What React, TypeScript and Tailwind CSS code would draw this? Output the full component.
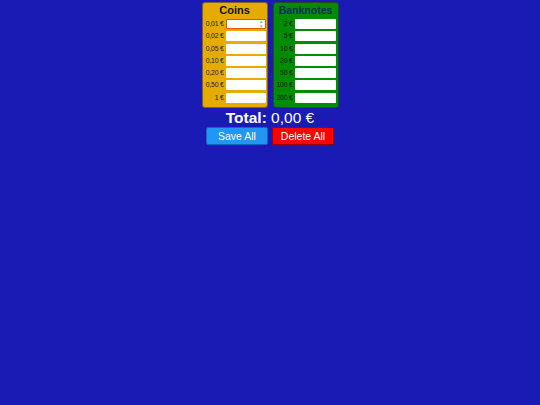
import React from "react";

const coins = ["0,01 €", "0,02 €", "0,05 €", "0,10 €", "0,20 €", "0,50 €", "1 €"];
const notes = ["2 €", "5 €", "10 €", "20 €", "50 €", "100 €", "200 €"];

function Panel({ title, items, kind }: { title: string; items: string[]; kind: "coins" | "notes" }) {
  const isCoins = kind === "coins";
  return (
    <div
      className={
        isCoins
          ? "w-[66px] h-[106px] rounded-[3px] border border-[#7a6420] bg-[#e6ab00] flex flex-col px-[1px]"
          : "w-[66px] h-[106px] rounded-[3px] border border-[#1f4d1f] bg-[#008c00] flex flex-col px-[1px]"
      }
    >
      <div
        className={
          isCoins
            ? "h-[15px] text-center text-[11px] font-bold leading-[15px] text-[#111]"
            : "h-[15px] text-center text-[10.5px] font-bold leading-[15px] text-[#07305a]"
        }
      >
        {title}
      </div>
      <div className="flex flex-col gap-[2.3px] mt-[1px]">
        {items.map((it, i) => (
          <div key={it} className="flex items-center h-[10px]">
            <span
              className={
                isCoins
                  ? "w-[20px] shrink-0 text-right text-[6.8px] leading-[10px] text-[#222] whitespace-nowrap tracking-[-0.2px]"
                  : "w-[18px] shrink-0 text-right text-[6.8px] leading-[10px] text-[#111] whitespace-nowrap tracking-[-0.2px]"
              }
            >
              {it}
            </span>
            <div
              className={
                i === 0 && isCoins
                  ? "ml-[2px] w-[40px] h-[10px] bg-white border border-[#e05a00] rounded-[1px] flex items-center justify-end pr-[2px]"
                  : "ml-[2px] w-[41px] h-[10px] bg-white rounded-[1px]"
              }
            >
              {i === 0 && isCoins ? (
                <span className="text-[5px] leading-[5px] text-[#999] flex flex-col items-center">
                  <span>▴</span>
                  <span>▾</span>
                </span>
              ) : null}
            </div>
          </div>
        ))}
      </div>
    </div>
  );
}

export default function App() {
  return (
    <div
      className="w-full h-[405px] bg-[#1a1ab4] flex flex-col items-center pt-[2px]"
      style={{ fontFamily: '"Liberation Sans", Arial, sans-serif' }}
    >
      <div className="flex gap-[5px]">
        <Panel title="Coins" items={coins} kind="coins" />
        <Panel title="Banknotes" items={notes} kind="notes" />
      </div>
      <div className="mt-[1px] text-white text-[15.5px] leading-[18px]">
        <span className="font-bold">Total:</span> 0,00 €
      </div>
      <div className="flex gap-[4px]">
        <button className="w-[62px] h-[18px] bg-[#2196f3] border border-[#1565c0] rounded-[2px] text-white text-[10.5px] leading-[16px]">
          Save All
        </button>
        <button className="w-[62px] h-[18px] bg-[#ff0000] border border-[#9a0000] rounded-[2px] text-white text-[10.5px] leading-[16px]">
          Delete All
        </button>
      </div>
    </div>
  );
}
